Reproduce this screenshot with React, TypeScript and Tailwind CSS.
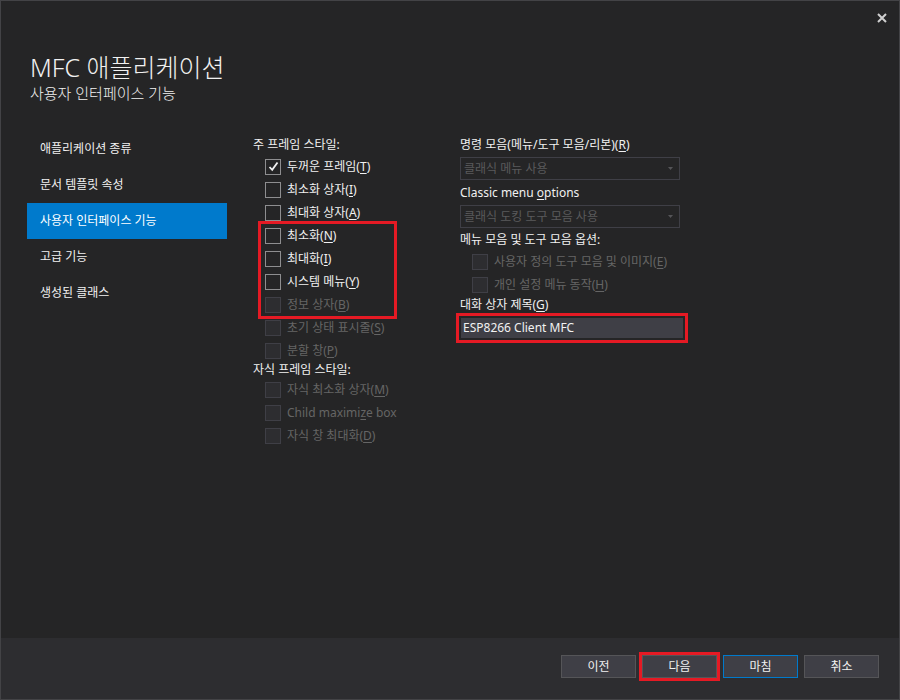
import React from 'react';

const FONT = "font-['Noto_Sans','Noto_Sans_CJK_KR',sans-serif]";

/** Text with one underlined mnemonic letter, e.g. 두꺼운 프레임(T). */
function Mn({ pre, k, post = '' }: { pre: string; k: string; post?: string }) {
  return (
    <span>
      {pre}
      <span className="underline underline-offset-2">{k}</span>
      {post}
    </span>
  );
}

function Check({
  checked,
  disabled,
  children,
}: {
  checked?: boolean;
  disabled?: boolean;
  children: React.ReactNode;
}) {
  return (
    <div className="flex h-[23px] items-center gap-[6px]">
      <span
        className={
          disabled
            ? 'flex h-4 w-4 shrink-0 items-center justify-center border border-[#3f3f46] bg-[#2d2d30]'
            : 'flex h-4 w-4 shrink-0 items-center justify-center border border-[#8e8e90]'
        }
      >
        {checked && (
          <svg width="11" height="11" viewBox="0 0 11 11">
            <path d="M1.5 6 L4.2 8.8 L9.5 1.5" fill="none" stroke="#f1f1f1" strokeWidth="1.8" />
          </svg>
        )}
      </span>
      <span className={disabled ? 'text-[#656565]' : 'text-[#f1f1f1]'}>{children}</span>
    </div>
  );
}

function DisabledSelect({ value }: { value: string }) {
  return (
    <div className="flex h-[23px] w-[220px] items-center justify-between border border-[#3f3f46] pl-[3px] pr-[6px] text-[#5a5a5c]">
      <span>{value}</span>
      <svg width="5" height="3" viewBox="0 0 5 3">
        <path d="M0 0 H5 L2.5 3 Z" fill="#555558" />
      </svg>
    </div>
  );
}

const navItems = ['애플리케이션 종류', '문서 템플릿 속성', '사용자 인터페이스 기능', '고급 기능', '생성된 클래스'];

export default function App() {
  return (
    <div
      className={`${FONT} flex h-[700px] w-[900px] flex-col border border-[#434346] bg-[#252526] text-[12px] text-[#f1f1f1]`}
    >
      {/* title bar */}
      <div className="flex h-[33px] items-center justify-end pr-[12px]">
        <svg width="10" height="10" viewBox="0 0 10 10">
          <path d="M1 1 L9 9 M9 1 L1 9" stroke="#d0d0d0" strokeWidth="2" />
        </svg>
      </div>

      <div className="pl-[29px] pt-[17px]">
        <div className="text-[25px] font-light leading-[32px]">MFC 애플리케이션</div>
        <div className="text-[15px] font-light leading-[20px]">사용자 인터페이스 기능</div>
      </div>

      <div className="mt-[28px] flex flex-1 pl-[26px]">
        {/* left nav */}
        <div className="w-[200px]">
          {navItems.map((item, i) => (
            <div
              key={item}
              className={
                i === 2
                  ? 'flex h-[36px] items-center bg-[#007acc] pl-[13px] text-white'
                  : 'flex h-[36px] items-center pl-[13px]'
              }
            >
              {item}
            </div>
          ))}
        </div>

        {/* middle column */}
        <div className="ml-[26px] w-[207px] pt-[4px]">
          <div className="flex h-[20px] items-center">주 프레임 스타일:</div>
          <div className="pl-[12px]">
            <Check checked>
              <Mn pre="두꺼운 프레임(" k="T" post=")" />
            </Check>
            <Check>
              <Mn pre="최소화 상자(" k="I" post=")" />
            </Check>
            <Check>
              <Mn pre="최대화 상자(" k="A" post=")" />
            </Check>
          </div>
          <div className="ml-[8px] w-[133px] outline-[3px] outline-[#e51a24] outline-solid">
            <div className="pl-[4px]">
              <Check>
                <Mn pre="최소화(" k="N" post=")" />
              </Check>
              <Check>
                <Mn pre="최대화(" k="I" post=")" />
              </Check>
              <Check>
                <Mn pre="시스템 메뉴(" k="Y" post=")" />
              </Check>
              <Check disabled>
                <Mn pre="정보 상자(" k="B" post=")" />
              </Check>
            </div>
          </div>
          <div className="pl-[12px]">
            <Check disabled>
              <Mn pre="초기 상태 표시줄(" k="S" post=")" />
            </Check>
            <Check disabled>
              <Mn pre="분할 창(" k="P" post=")" />
            </Check>
          </div>
          <div className="flex h-[16px] items-center">자식 프레임 스타일:</div>
          <div className="pl-[12px]">
            <Check disabled>
              <Mn pre="자식 최소화 상자(" k="M" post=")" />
            </Check>
            <Check disabled>
              <Mn pre="Child maximi" k="z" post="e box" />
            </Check>
            <Check disabled>
              <Mn pre="자식 창 최대화(" k="D" post=")" />
            </Check>
          </div>
        </div>

        {/* right column */}
        <div className="w-[232px] pt-[4px]">
          <div className="flex h-[20px] items-center">
            <Mn pre="명령 모음(메뉴/도구 모음/리본)(" k="R" post=")" />
          </div>
          <div className="mt-[2px]">
            <DisabledSelect value="클래식 메뉴 사용" />
          </div>
          <div className="flex h-[25px] items-center pt-[1px]">
            <Mn pre="Classic menu " k="o" post="ptions" />
          </div>
          <DisabledSelect value="클래식 도킹 도구 모음 사용" />
          <div className="flex h-[22px] items-center pt-[2px]">메뉴 모음 및 도구 모음 옵션:</div>
          <div className="pl-[12px]">
            <Check disabled>
              <Mn pre="사용자 정의 도구 모음 및 이미지(" k="E" post=")" />
            </Check>
            <Check disabled>
              <Mn pre="개인 설정 메뉴 동작(" k="H" post=")" />
            </Check>
          </div>
          <div className="flex h-[17px] items-center">
            <Mn pre="대화 상자 제목(" k="G" post=")" />
          </div>
          <div className="-ml-[4px] w-[232px] border-[3px] border-[#e51a24] p-[2px]">
            <div className="flex h-[20px] items-center bg-[#3f3f46] pl-[2px]">ESP8266 Client MFC</div>
          </div>
        </div>
      </div>

      {/* footer */}
      <div className="flex h-[61px] items-start justify-end gap-[6px] bg-[#2d2d30] pr-[20px] pt-[17px]">
        <button className="h-[23px] w-[75px] border border-[#555558] bg-[#3f3f46] text-[12px]">이전</button>
        <button className="h-[23px] w-[75px] border border-[#555558] bg-[#3f3f46] text-[12px] outline-[3px] outline-[#e51a24] outline-solid">
          다음
        </button>
        <button className="h-[23px] w-[75px] border border-[#007acc] bg-[#3f3f46] text-[12px]">마침</button>
        <button className="h-[23px] w-[75px] border border-[#555558] bg-[#3f3f46] text-[12px]">취소</button>
      </div>
    </div>
  );
}
